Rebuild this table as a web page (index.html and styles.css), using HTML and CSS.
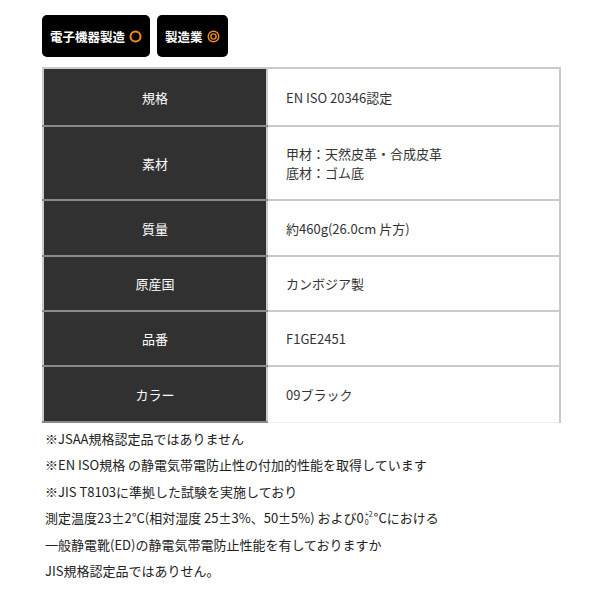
FILE: index.html
```html
<!DOCTYPE html>
<html lang="ja">
<head>
  <meta charset="UTF-8">
  <title>製品仕様</title>
  <link rel="stylesheet" href="styles.css">
</head>
<body>
  <div class="tags">
    <span class="tag">電子機器製造
      <svg class="mark" width="13" height="13" viewBox="0 0 13 13"><circle cx="6.5" cy="6.5" r="5" fill="none" stroke="#f08c1e" stroke-width="2"/></svg>
    </span>
    <span class="tag">製造業
      <svg class="mark" width="13" height="13" viewBox="0 0 13 13"><circle cx="6.5" cy="6.5" r="5.3" fill="none" stroke="#f08c1e" stroke-width="1.4"/><circle cx="6.5" cy="6.5" r="2.6" fill="none" stroke="#f08c1e" stroke-width="1.4"/></svg>
    </span>
  </div>

  <table class="spec">
    <tr class="row-1"><th>規格</th><td>EN ISO 20346認定</td></tr>
    <tr class="row-2"><th>素材</th><td>甲材：天然皮革・合成皮革<br>底材：ゴム底</td></tr>
    <tr class="row-3"><th>質量</th><td>約460g(26.0cm 片方)</td></tr>
    <tr class="row-4"><th>原産国</th><td>カンボジア製</td></tr>
    <tr class="row-4"><th>品番</th><td>F1GE2451</td></tr>
    <tr class="row-3"><th>カラー</th><td>09ブラック</td></tr>
  </table>

  <div class="notes">
    <p>※JSAA規格認定品ではありません</p>
    <p>※EN ISO規格 の静電気帯電防止性の付加的性能を取得しています</p>
    <p>※JIS T8103に準拠した試験を実施しており</p>
    <p>測定温度23±2°C(相対湿度 25±3%、50±5%) および0<span class="pm"><span class="pm-up">+2</span><span class="pm-down">0</span></span>°Cにおける</p>
    <p>一般静電靴(ED)の静電気帯電防止性能を有しておりますか</p>
    <p>JIS規格認定品ではありせん。</p>
  </div>
</body>
</html>
```

FILE: styles.css
```css
* {
  margin: 0;
  padding: 0;
  box-sizing: border-box;
}

body {
  font-family: "Noto Sans CJK JP", "Noto Sans", sans-serif;
  background-color: #fff;
  color: #222;
  padding: 15px 40px 0 42px;
}

/* badges */
.tags {
  display: flex;
  gap: 7px;
  margin-bottom: 10px;
}

.tag {
  display: inline-flex;
  align-items: center;
  gap: 4px;
  height: 42px;
  padding: 0 8px 0 8px;
  background-color: #000;
  color: #fff;
  font-size: 12.5px;
  font-weight: bold;
  border-radius: 5px;
}

.tag .mark {
  display: block;
}

/* spec table */
.spec {
  width: 519px;
  border-collapse: collapse;
  font-size: 13px;
}

.spec th,
.spec td {
  border: 2px solid #cacaca;
}

.spec th {
  width: 224px;
  background-color: #313131;
  color: #fff;
  font-weight: normal;
  text-align: center;
  border-color: #8a8a8a #cacaca;
}

.spec td {
  padding-left: 18px;
  color: #333;
  line-height: 19px;
  border-left: none;
}

.spec tr:first-child th,
.spec tr:first-child td {
  border-top-color: #cacaca;
}

.spec tr:last-child td {
  border-bottom: 1px solid #eee;
}

.spec .row-1 th,
.spec .row-1 td {
  height: 58px;
}

.spec .row-2 th,
.spec .row-2 td {
  height: 74px;
}

.spec .row-3 th,
.spec .row-3 td {
  height: 56px;
}

.spec .row-4 th,
.spec .row-4 td {
  height: 55px;
}

/* notes under the table */
.notes {
  padding: 3px 0 0 3px;
  font-size: 13px;
  line-height: 26.4px;
  color: #222;
}

.pm {
  display: inline-block;
  vertical-align: -2px;
  font-size: 7px;
  line-height: 8px;
  margin: 0 1px;
}

.pm-up,
.pm-down {
  display: block;
}
```
